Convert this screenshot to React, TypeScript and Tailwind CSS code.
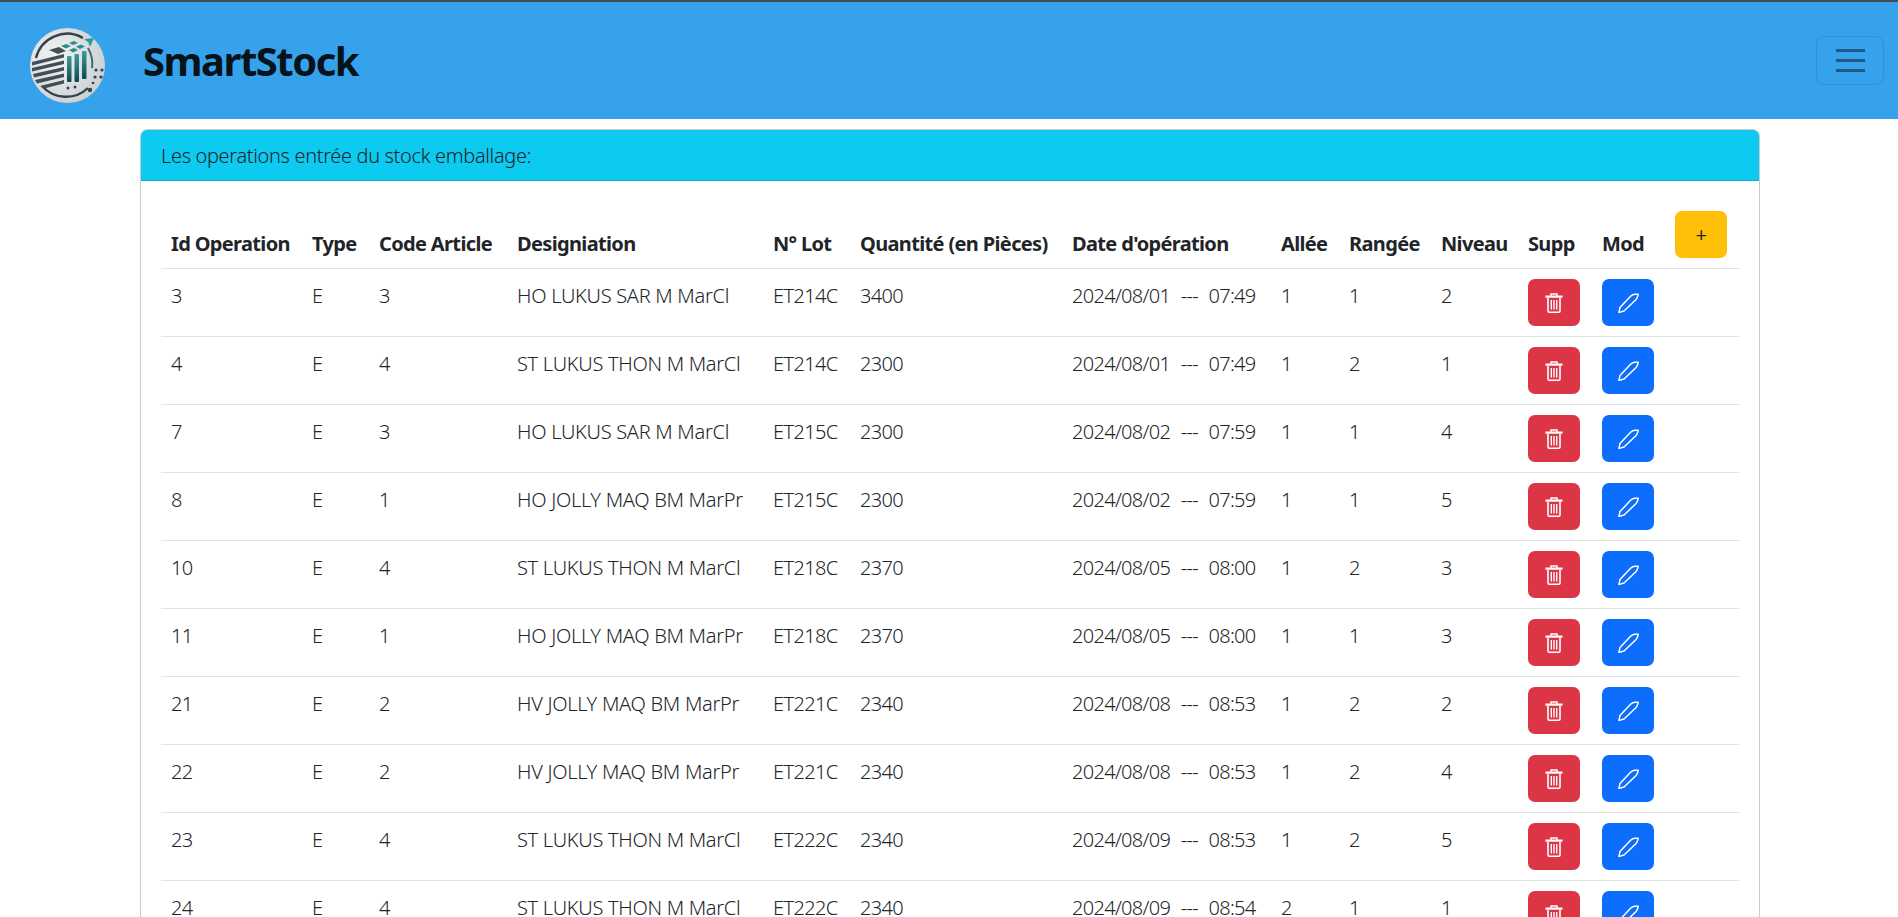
const rows = [
  ["3", "E", "3", "HO LUKUS SAR M MarCl", "ET214C", "3400", "2024/08/01 --- 07:49", "1", "1", "2"],
  ["4", "E", "4", "ST LUKUS THON M MarCl", "ET214C", "2300", "2024/08/01 --- 07:49", "1", "2", "1"],
  ["7", "E", "3", "HO LUKUS SAR M MarCl", "ET215C", "2300", "2024/08/02 --- 07:59", "1", "1", "4"],
  ["8", "E", "1", "HO JOLLY MAQ BM MarPr", "ET215C", "2300", "2024/08/02 --- 07:59", "1", "1", "5"],
  ["10", "E", "4", "ST LUKUS THON M MarCl", "ET218C", "2370", "2024/08/05 --- 08:00", "1", "2", "3"],
  ["11", "E", "1", "HO JOLLY MAQ BM MarPr", "ET218C", "2370", "2024/08/05 --- 08:00", "1", "1", "3"],
  ["21", "E", "2", "HV JOLLY MAQ BM MarPr", "ET221C", "2340", "2024/08/08 --- 08:53", "1", "2", "2"],
  ["22", "E", "2", "HV JOLLY MAQ BM MarPr", "ET221C", "2340", "2024/08/08 --- 08:53", "1", "2", "4"],
  ["23", "E", "4", "ST LUKUS THON M MarCl", "ET222C", "2340", "2024/08/09 --- 08:53", "1", "2", "5"],
  ["24", "E", "4", "ST LUKUS THON M MarCl", "ET222C", "2340", "2024/08/09 --- 08:54", "2", "1", "1"],
];

const headers = [
  "Id Operation",
  "Type",
  "Code Article",
  "Designiation",
  "N° Lot",
  "Quantité (en Pièces)",
  "Date d'opération",
  "Allée",
  "Rangée",
  "Niveau",
  "Supp",
  "Mod",
];

const widths = [
  "w-[141px]",
  "w-[67px]",
  "w-[138px]",
  "w-[256px]",
  "w-[87px]",
  "w-[212px]",
  "w-[209px]",
  "w-[68px]",
  "w-[92px]",
  "w-[87px]",
  "w-[74px]",
  "w-[73px]",
  "w-[74px]",
];

function Logo() {
  return (
    <svg viewBox="0 0 75 75" className="w-[75px] h-[75px] mt-[10px]">
      <defs>
        <radialGradient id="disc" cx="35%" cy="40%" r="70%">
          <stop offset="0%" stopColor="#f4f5f5" />
          <stop offset="100%" stopColor="#c9ced1" />
        </radialGradient>
        <linearGradient id="teal" x1="0" y1="0" x2="0" y2="1">
          <stop offset="0%" stopColor="#3f9d9c" />
          <stop offset="100%" stopColor="#0b4a52" />
        </linearGradient>
      </defs>
      <circle cx="37.5" cy="37.5" r="37.5" fill="url(#disc)" />
      <path d="M6 30 A32 32 0 0 1 53 10" fill="none" stroke="#33424a" strokeWidth="2.4" />
      <path d="M12 58 A32 32 0 0 0 58 60" fill="none" stroke="#33424a" strokeWidth="2.4" />
      <path d="M58 20 A31 31 0 0 1 62 40" fill="none" stroke="#2f6f75" strokeWidth="2" />
      <path d="M54 11 L64 10 L60 19 L58.5 14.5 Z" fill="#2a9aa0" />
      <g fill="#434e55">
        <path d="M2 34 L34 26 V29.5 L2 37.5 Z" />
        <path d="M2 40 L34 32.5 V36 L2 43.5 Z" />
        <path d="M3 46 L34 39 V42.5 L4 49.5 Z" />
        <path d="M5 52 L34 45.5 V49 L7 55.5 Z" />
        <path d="M10 58 L34 52 V55.5 L14 60.5 Z" />
      </g>
      <path d="M19 22 L29 19 L36 23 L28 26 Z" fill="#434e55" />
      <g fill="#2d8c8c">
        <path d="M31 18 L36 16 L41 18 L36 20.5 Z" />
        <path d="M39 15 L44 13 L48 15 L43 17 Z" />
        <path d="M39 22 L44 20 L48 22 L43 24.5 Z" />
        <path d="M46 18.5 L51 16.5 L55 18.5 L50 21 Z" />
      </g>
      <g fill="url(#teal)">
        <rect x="37" y="28" width="4.5" height="26" rx="1" />
        <rect x="44.5" y="26" width="4.5" height="28" rx="1" />
        <rect x="52" y="23" width="4.5" height="28" rx="1" />
      </g>
      <g fill="#33424a">
        <circle cx="66" cy="42" r="1.6" />
        <circle cx="72" cy="42" r="1.6" />
        <circle cx="65" cy="49" r="1.6" />
        <circle cx="71" cy="49" r="1.6" />
        <circle cx="38" cy="60" r="1.5" />
        <circle cx="45" cy="59" r="1.5" />
        <circle cx="60" cy="62" r="2.2" />
        <circle cx="63" cy="55" r="1.3" />
      </g>
    </svg>
  );
}

function TrashIcon() {
  return (
    <svg viewBox="0 0 18 20" className="w-[18px] h-[20px]" fill="none" stroke="#fff" strokeWidth="1.6">
      <path d="M0.5 3.6 H17.5" strokeWidth="2.2" />
      <path d="M6 3 V1 H12 V3" strokeWidth="1.4" />
      <path d="M3 4.5 V18 Q3 19.2 4.2 19.2 H13.8 Q15 19.2 15 18 V4.5" />
      <path d="M6.3 7 V16.5 M9 7 V16.5 M11.7 7 V16.5" strokeWidth="1.4" />
    </svg>
  );
}

function PenIcon() {
  return (
    <svg viewBox="0 0 21 20" className="w-[21px] h-[20px]" fill="none" stroke="#fff" strokeWidth="1.5" strokeLinejoin="round">
      <path d="M0.9 19.4 L2 14.6 L12.8 3 Q14.6 1.2 17 1.2 H20.2 L19.6 3.8 Q19 5.6 17.6 7 L6 18 Z" />
    </svg>
  );
}

function cellClass(col: number) {
  const base = "px-[10px] pt-[12px] pb-[9px] align-top whitespace-nowrap font-light";
  if (col === 3) return base + " tracking-[-0.3px]";
  if (col === 6) return base + " tracking-[-0.7px] [word-spacing:6px]";
  return base;
}

export default function App() {
  return (
    <div className="h-[917px] overflow-hidden bg-white text-[#212529] font-['Noto_Sans','Open_Sans',sans-serif] text-[20px] leading-[30px] tracking-[-0.65px]">
      <nav className="h-[119px] bg-[#36a2eb] border-t-2 border-[#444b52] flex items-center justify-between pl-[30px] pr-[14px]">
        <div className="flex items-center">
          <Logo />
          <span className="ml-[38px] text-[40px] leading-[60px] font-bold tracking-[-1.5px] text-[#07121a]">SmartStock</span>
        </div>
        <button className="w-[68px] h-[49px] rounded-[8px] border border-black/10 flex flex-col items-center justify-center gap-[7px]">
          <span className="block w-[29px] h-[3px] bg-[#1f5a85]" />
          <span className="block w-[29px] h-[3px] bg-[#1f5a85]" />
          <span className="block w-[29px] h-[3px] bg-[#1f5a85]" />
        </button>
      </nav>

      <main className="pt-[10px] pl-[140px]">
        <div className="w-[1620px] rounded-[7px] border border-black/20">
          <div className="h-[51px] bg-[#0dcaf0] rounded-t-[6px] border-b border-black/15 px-[20px] pt-[1px] flex items-center font-light tracking-[-0.35px]">
            Les operations entrée du stock emballage:
          </div>
          <div className="p-[20px]">
            <table className="table-fixed w-[1578px] border-collapse">
              <colgroup>
                {widths.map((w, i) => (
                  <col key={i} className={w} />
                ))}
              </colgroup>
              <thead>
                <tr className="border-b border-[#dee2e6]">
                  {headers.map((h) => (
                    <th key={h} className="px-[10px] pt-[10px] pb-[9px] text-left align-bottom font-bold whitespace-nowrap">
                      {h}
                    </th>
                  ))}
                  <th className="pt-[10px] pb-[10px] pl-[10px] text-left">
                    <button className="w-[52px] h-[47px] rounded-[7px] bg-[#ffc107] text-[#212529] text-[20px] font-normal flex items-center justify-center">
                      +
                    </button>
                  </th>
                </tr>
              </thead>
              <tbody>
                {rows.map((r, i) => (
                  <tr key={i} className="border-b border-[#dee2e6]">
                    {r.map((c, j) => (
                      <td key={j} className={cellClass(j)}>
                        {c}
                      </td>
                    ))}
                    <td className="p-[10px]">
                      <button className="w-[52px] h-[47px] rounded-[7px] bg-[#dc3545] flex items-center justify-center">
                        <TrashIcon />
                      </button>
                    </td>
                    <td className="p-[10px]">
                      <button className="w-[52px] h-[47px] rounded-[7px] bg-[#0d6efd] flex items-center justify-center">
                        <PenIcon />
                      </button>
                    </td>
                  </tr>
                ))}
              </tbody>
            </table>
          </div>
        </div>
      </main>
    </div>
  );
}
